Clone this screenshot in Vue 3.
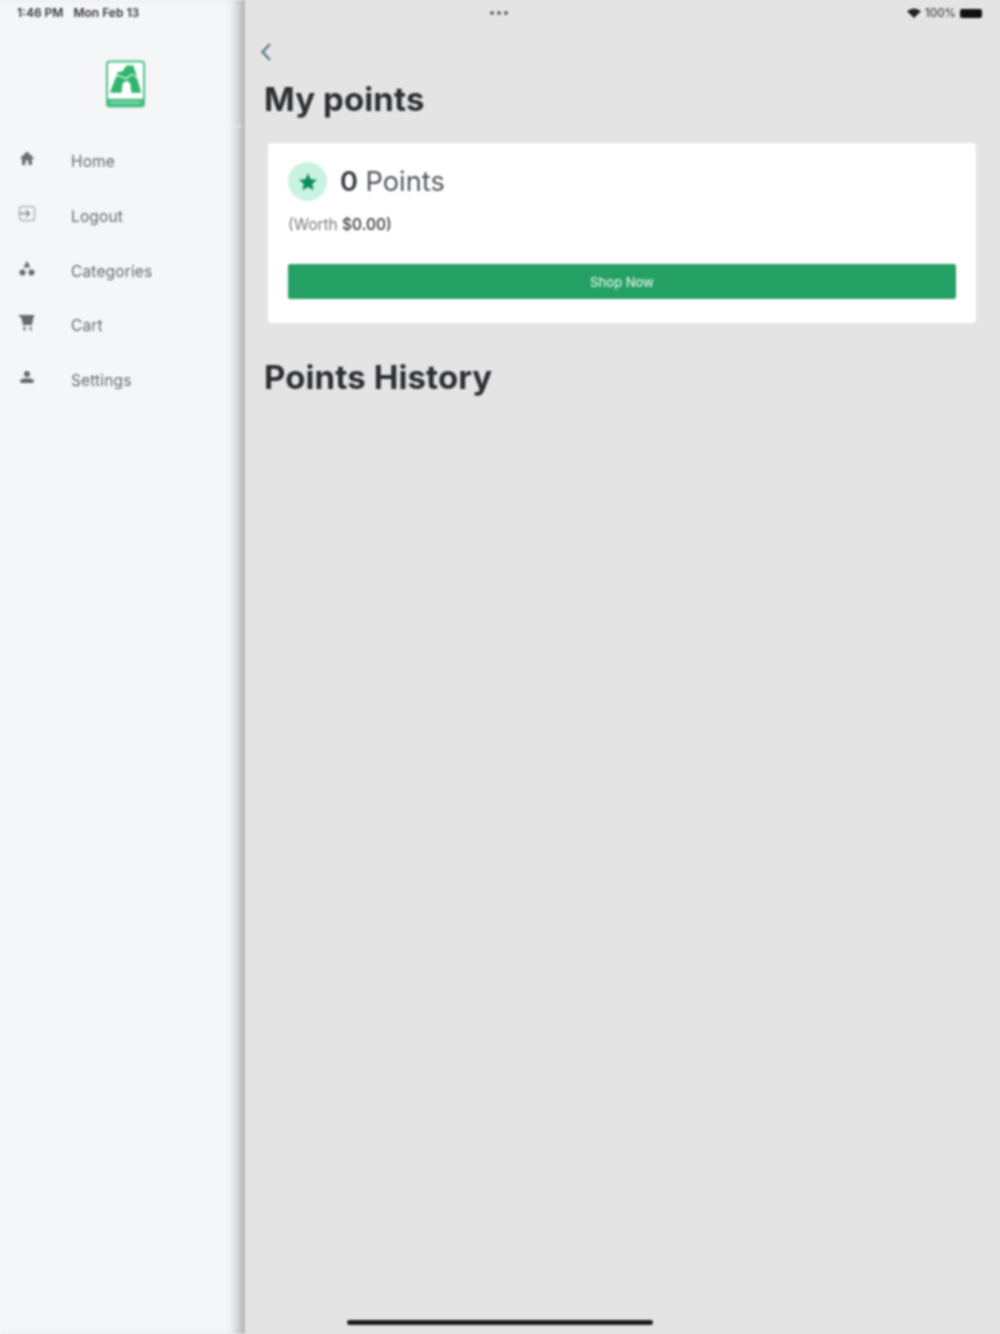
<template>
  <div class="screen">
    <aside class="sidebar">
      <div class="clock">
        <span>1:46 PM</span>
        <span>Mon Feb 13</span>
      </div>
      <div class="logo-row">
        <svg class="logo" viewBox="0 0 40 48" width="39" height="48">
          <rect x="1" y="1" width="38" height="46" rx="3" fill="#fff" stroke="#4cc184" stroke-width="2" />
          <path d="M4 33 L12 12 L17 11 L21 5 L28 5 L31 14 L36 33 L26 33 L25 24 Q21 18 17 24 L16 33 Z" fill="#2fb56d" />
          <path d="M9 17 Q13 14 17 17 T24 16 T32 18" fill="none" stroke="#fff" stroke-width="1.2" />
          <path d="M1 39 H39 V44 Q39 47 36 47 H4 Q1 47 1 44 Z" fill="#45bf80" />
          <rect x="5" y="42" width="30" height="2" fill="#8ed8b0" />
        </svg>
      </div>
      <nav class="nav">
        <a v-for="item in navItems" :key="item.label" class="nav-item">
          <svg class="nav-icon" viewBox="0 0 18 18" width="18" height="18" v-html="item.icon"></svg>
          <span>{{ item.label }}</span>
        </a>
      </nav>
    </aside>

    <main class="content">
      <div class="status">
        <div class="dots"><i></i><i></i><i></i></div>
        <div class="status-right">
          <svg viewBox="0 0 14 10" width="14" height="10">
            <path d="M0 3.2 Q7 -2 14 3.2 L7 10 Z" fill="#222" />
          </svg>
          <span>100%</span>
          <span class="battery"></span>
        </div>
      </div>

      <svg class="back" viewBox="0 0 12 20" width="12" height="20">
        <path d="M10 2 L2.5 10 L10 18" fill="none" stroke="#5a7a90" stroke-width="2.4" />
      </svg>

      <h1 class="title">My points</h1>

      <section class="card">
        <div class="points-row">
          <span class="star-badge">
            <svg viewBox="0 0 24 24" width="22" height="22">
              <path d="M12 2.5 L14.8 9 L21.8 9.6 L16.5 14.2 L18.1 21 L12 17.4 L5.9 21 L7.5 14.2 L2.2 9.6 L9.2 9 Z" fill="#0b8a5c" />
            </svg>
          </span>
          <span class="points"><b>0</b> Points</span>
        </div>
        <p class="worth">(Worth <b>$0.00)</b></p>
        <button class="shop">Shop Now</button>
      </section>

      <h1 class="history">Points History</h1>
    </main>

    <div class="home-bar"></div>
  </div>
</template>

<script setup>
const navItems = [
  {
    label: 'Home',
    icon: '<path d="M9 1.5 L16.5 8.5 H14 V15 H10.5 V10.5 H7.5 V15 H4 V8.5 H1.5 Z" fill="#6b6e73"/>'
  },
  {
    label: 'Logout',
    icon: '<rect x="1.5" y="1.5" width="15" height="14" rx="2.5" fill="none" stroke="#b0b2b6" stroke-width="1.4"/><path d="M1.5 8.5 H11 M8 5 L11.5 8.5 L8 12" fill="none" stroke="#85878b" stroke-width="1.4"/>'
  },
  {
    label: 'Categories',
    icon: '<path d="M9 1 L12.5 7.5 H5.5 Z" fill="#66696e"/><circle cx="4.5" cy="12.5" r="3" fill="#66696e"/><circle cx="13.5" cy="12.5" r="3" fill="#66696e"/>'
  },
  {
    label: 'Cart',
    icon: '<path d="M1 1 H16.5 L15 5 L14 11 H5 L4 6 L3 3 H1 Z" fill="#66696e"/><path d="M5 12.5 H8 V16.5 H5 Z M11.5 12.5 H14 V16.5 H11.5 Z" fill="#93959a"/>'
  },
  {
    label: 'Settings',
    icon: '<circle cx="9" cy="5" r="3" fill="#66696e"/><path d="M2.5 10.5 Q9 8 15.5 10.5 V14 H2.5 Z" fill="#66696e"/>'
  }
]
</script>

<style>
html,
body {
  margin: 0;
  /* the blur on .screen samples past its edges, this keeps them from going pale */
  background: linear-gradient(90deg, #f5f6f8 245px, #e4e4e4 245px);
}
</style>

<style scoped>
.screen {
  position: relative;
  display: flex;
  width: 1000px;
  height: 1334px;
  overflow: hidden;
  font-family: Inter, "Noto Sans", sans-serif;
  filter: blur(1px);
}

.sidebar {
  flex: 0 0 245px;
  background: #f5f6f8;
  box-shadow: inset -14px 0 13px -8px rgba(0, 0, 0, 0.32);
}

.clock {
  display: flex;
  gap: 10px;
  padding: 6px 0 0 17px;
  height: 20px;
  font-size: 12px;
  line-height: 14px;
  font-weight: 600;
  color: #333;
}

.logo-row {
  display: flex;
  justify-content: center;
  padding: 34px 0 18px;
  margin-right: 3px;
  border-bottom: 1px solid #eeeff1;
}

.logo {
  margin-left: 9px;
}

.nav {
  display: flex;
  flex-direction: column;
  padding-top: 7.5px;
}

.nav-item {
  display: flex;
  align-items: center;
  height: 54.7px;
  padding-left: 18px;
  font-size: 15.5px;
  letter-spacing: 0.15px;
  color: #66696e;
}

.nav-icon {
  margin: -5px 35px 0 0;
}

.content {
  flex: 1;
  background: #e4e4e4;
  padding: 0 24px 0 19px;
}

.status {
  position: relative;
  display: flex;
  justify-content: flex-end;
  height: 26px;
  margin-right: -6px;
}

.dots {
  position: absolute;
  left: 226px;
  top: 11px;
  display: flex;
  gap: 3px;
}

.dots i {
  width: 4px;
  height: 4px;
  border-radius: 50%;
  background: #666;
}

.status-right {
  display: flex;
  align-items: center;
  gap: 4px;
  font-size: 11.5px;
  font-weight: 500;
  color: #444;
}

.battery {
  width: 22px;
  height: 9px;
  border-radius: 2px;
  background: #111;
}

.back {
  display: block;
  margin: 16px 0 0 -4px;
}

h1 {
  margin: 0;
  font-size: 33px;
  line-height: 40px;
  font-weight: 700;
  letter-spacing: 0.1px;
  color: #2c3036;
}

.title {
  margin-top: 17px;
}

.card {
  margin: 24px 0 0 4px;
  padding: 19px 20px 25px;
  height: 180px;
  box-sizing: border-box;
  background: #fff;
  border-radius: 4px;
}

.points-row {
  display: flex;
  align-items: center;
  gap: 13px;
}

.star-badge {
  display: flex;
  align-items: center;
  justify-content: center;
  width: 39px;
  height: 39px;
  border-radius: 50%;
  background: #c9f3e0;
}

.points {
  font-size: 27.2px;
  color: #50555b;
}

.points b {
  font-weight: 600;
  color: #34383e;
}

.worth {
  margin: 14px 0 0;
  font-size: 15.5px;
  line-height: 20px;
  color: #777a7f;
}

.worth b {
  font-weight: 500;
  color: #34383e;
}

.shop {
  display: block;
  width: 100%;
  height: 35px;
  margin-top: 29px;
  border: 0;
  border-radius: 2px;
  background: #25a065;
  color: #d8f0e4;
  font-family: inherit;
  font-size: 13px;
  font-weight: 500;
}

.history {
  margin-top: 34px;
}

.home-bar {
  position: absolute;
  left: 347px;
  bottom: 9px;
  width: 306px;
  height: 5px;
  border-radius: 3px;
  background: #1c1c1e;
}
</style>
